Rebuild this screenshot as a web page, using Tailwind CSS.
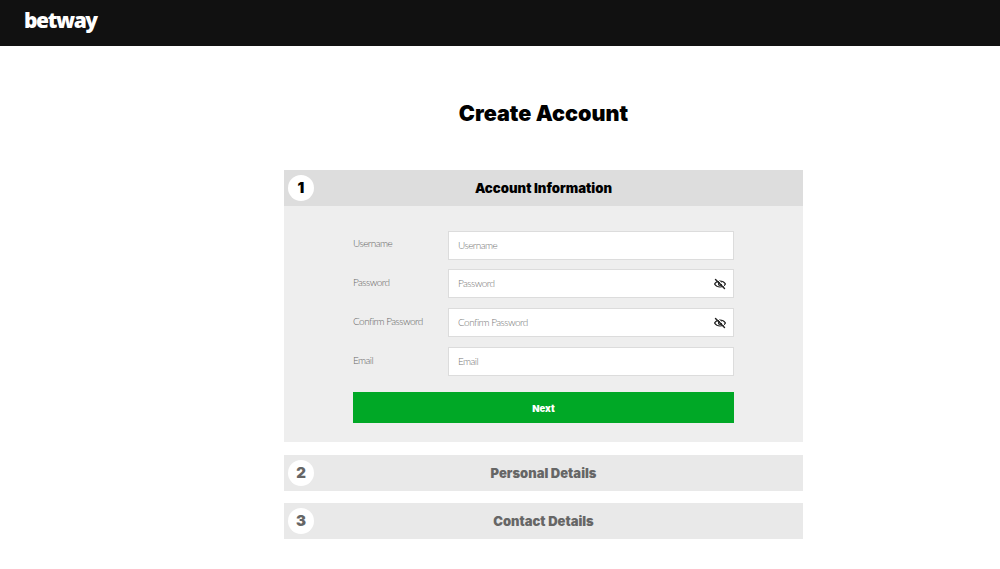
<!DOCTYPE html>
<html lang="en">
<head>
    <meta charset="UTF-8">
    <meta name="viewport" content="width=device-width, initial-scale=1.0">
    <title>Create Account</title>
    <script src="https://cdn.jsdelivr.net/npm/@tailwindcss/browser@4"></script>
</head>
<body class="bg-white font-['Inter',sans-serif]">

    <!-- Header -->
    <header class="h-[46px] bg-[#111111] pl-[24px] flex items-start">
        <span class="mt-[6px] text-[21px] leading-[28px] font-extrabold tracking-[-1.4px] text-white font-['Open_Sans',sans-serif]">betway</span>
    </header>

    <main class="ml-[284px] w-[519px]">
        <h1 class="h-[124px] pt-[53px] text-center text-[21.6px] leading-[28px] font-black text-black">Create Account</h1>

        <!-- Step 1 -->
        <section>
            <div class="relative h-[36px] bg-[#dddddd] flex items-center justify-center">
                <span class="absolute left-[4px] top-[5px] w-[26px] h-[26px] rounded-full bg-white flex items-center justify-center text-[15px] font-black text-black">1</span>
                <h2 class="pt-[2px] text-[13.2px] font-black text-black">Account Information</h2>
            </div>
            <form class="h-[236px] bg-[#eeeeee] px-[69px] pt-[25px]">
                <div class="flex h-[29px]">
                    <label class="w-[95px] pt-[5px] text-[10px] leading-[14px] tracking-[-0.55px] font-light text-[#666666] font-['Lato',sans-serif]">Username</label>
                    <div class="flex-1 bg-white border border-[#dcdcdc] flex items-center pl-[9px] text-[10px] tracking-[-0.55px] font-light text-[#777777] font-['Lato',sans-serif]">Username</div>
                </div>
                <div class="flex h-[29px] mt-[9px]">
                    <label class="w-[95px] pt-[6px] text-[10px] leading-[14px] tracking-[-0.55px] font-light text-[#666666] font-['Lato',sans-serif]">Password</label>
                    <div class="flex-1 bg-white border border-[#dcdcdc] flex items-center justify-between pl-[9px] pr-[7px] text-[10px] tracking-[-0.55px] font-light text-[#777777] font-['Lato',sans-serif]">
                        Password
                        <svg xmlns="http://www.w3.org/2000/svg" width="12" height="12" viewBox="0 0 24 24" fill="none" stroke="#222222" stroke-width="2.4" stroke-linecap="round" stroke-linejoin="round"><path d="M1 12s4-6 11-6 11 6 11 6-4 6-11 6-11-6-11-6z"/><circle cx="12" cy="12" r="3"/><path stroke="#ffffff" stroke-width="2" d="M6 2l16 16"/><path stroke-width="2.8" d="M3 3l18 18"/></svg>
                    </div>
                </div>
                <div class="flex h-[29px] mt-[10px]">
                    <label class="w-[95px] pt-[6px] text-[10px] leading-[14px] tracking-[-0.55px] font-light text-[#666666] font-['Lato',sans-serif]">Confirm Password</label>
                    <div class="flex-1 bg-white border border-[#dcdcdc] flex items-center justify-between pl-[9px] pr-[7px] text-[10px] tracking-[-0.55px] font-light text-[#777777] font-['Lato',sans-serif]">
                        Confirm Password
                        <svg xmlns="http://www.w3.org/2000/svg" width="12" height="12" viewBox="0 0 24 24" fill="none" stroke="#222222" stroke-width="2.4" stroke-linecap="round" stroke-linejoin="round"><path d="M1 12s4-6 11-6 11 6 11 6-4 6-11 6-11-6-11-6z"/><circle cx="12" cy="12" r="3"/><path stroke="#ffffff" stroke-width="2" d="M6 2l16 16"/><path stroke-width="2.8" d="M3 3l18 18"/></svg>
                    </div>
                </div>
                <div class="flex h-[29px] mt-[10px]">
                    <label class="w-[95px] pt-[6px] text-[10px] leading-[14px] tracking-[-0.55px] font-light text-[#666666] font-['Lato',sans-serif]">Email</label>
                    <div class="flex-1 bg-white border border-[#dcdcdc] flex items-center pl-[9px] text-[10px] tracking-[-0.55px] font-light text-[#777777] font-['Lato',sans-serif]">Email</div>
                </div>
                <button type="button" class="mt-[16px] w-full h-[31px] pt-[3px] bg-[#00a826] text-white text-[9.5px] font-black">Next</button>
            </form>
        </section>

        <!-- Step 2 -->
        <section class="mt-[13px] relative h-[36px] bg-[#e9e9e9] flex items-center justify-center">
            <span class="absolute left-[4px] top-[5px] w-[26px] h-[26px] rounded-full bg-white flex items-center justify-center text-[15px] font-black text-[#666666]">2</span>
            <h2 class="pt-[2px] text-[13px] font-black text-[#666666]">Personal Details</h2>
        </section>

        <!-- Step 3 -->
        <section class="mt-[12px] relative h-[36px] bg-[#e9e9e9] flex items-center justify-center">
            <span class="absolute left-[4px] top-[5px] w-[26px] h-[26px] rounded-full bg-white flex items-center justify-center text-[15px] font-black text-[#666666]">3</span>
            <h2 class="pt-[2px] text-[13px] font-black text-[#666666]">Contact Details</h2>
        </section>
    </main>
</body>
</html>
